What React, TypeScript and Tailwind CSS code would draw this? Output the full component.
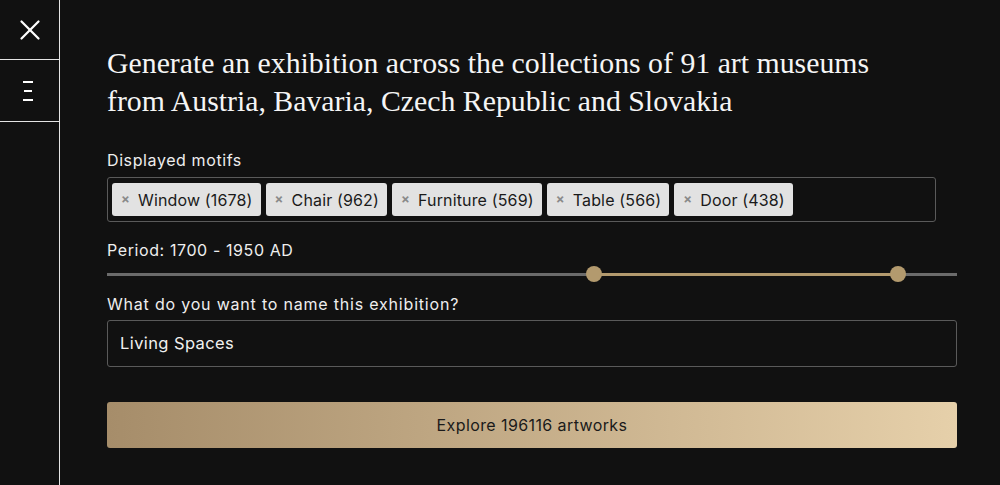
import { X } from "lucide-react";

const motifs = [
  "Window (1678)",
  "Chair (962)",
  "Furniture (569)",
  "Table (566)",
  "Door (438)",
];

const sans = { fontFamily: "Inter, 'Noto Sans', sans-serif" };

export default function App() {
  return (
    <div className="flex h-[485px] w-[1000px] overflow-hidden bg-[#111111] text-white" style={sans}>
      <aside className="flex w-[60px] shrink-0 flex-col border-r border-[#e5e5e5]">
        <div className="flex h-[60px] items-center justify-center border-b border-[#e5e5e5]">
          <X className="h-[34px] w-[34px] text-white" strokeWidth={1.6} />
        </div>
        <div className="flex h-[62px] flex-col items-center justify-center gap-[7px] border-b border-[#e5e5e5] pr-[3px]">
          <span className="h-[2px] w-[10px] bg-white" />
          <span className="h-[2px] w-[8px] bg-white" />
          <span className="h-[2px] w-[10px] bg-white" />
        </div>
      </aside>

      <main className="flex-1 pl-[47px] pr-[43px] pt-[44px]">
        <h1
          className="whitespace-nowrap text-[29.8px] leading-[38px] text-[#f5f5f5]"
          style={{ fontFamily: "'Liberation Serif', serif" }}
        >
          Generate an exhibition across the collections of 91 art museums
          <br />
          from Austria, Bavaria, Czech Republic and Slovakia
        </h1>

        <label className="mt-[30px] block text-[16px] leading-[20px] tracking-[0.6px] text-[#eeeeee]">
          Displayed motifs
        </label>
        <div className="mt-[7px] flex h-[45px] w-[829px] items-center gap-[5px] rounded-[3px] border border-[#5a5a5a] px-[4px]">
          {motifs.map((m) => (
            <span
              key={m}
              className="flex h-[33px] items-center gap-[8px] rounded-[3px] bg-[#e2e2e2] pl-[9px] pr-[8px] text-[16px] tracking-[0.15px] text-[#1a1a1a]"
            >
              <span className="text-[13px] font-bold text-[#8a8a8a]">×</span>
              {m}
            </span>
          ))}
        </div>

        <p className="mt-[18px] text-[16px] leading-[20px] tracking-[0.6px] text-[#eeeeee]">
          Period: 1700 - 1950 AD
        </p>
        <div className="relative mt-[6px] h-[16px]">
          <div className="absolute left-0 right-0 top-[7px] h-[3px] bg-[#6b6b6b]" />
          <div className="absolute left-[487px] right-[59px] top-[7px] h-[3px] bg-[#b39a6e]" />
          <div className="absolute left-[479px] top-0 h-[16px] w-[16px] rounded-full bg-[#b39a6e]" />
          <div className="absolute left-[783px] top-0 h-[16px] w-[16px] rounded-full bg-[#b39a6e]" />
        </div>

        <label className="mt-[12px] block text-[16px] leading-[20px] tracking-[0.8px] text-[#eeeeee]">
          What do you want to name this exhibition?
        </label>
        <div className="mt-[6px] flex h-[47px] items-center rounded-[3px] border border-[#5a5a5a] px-[12px] text-[16.5px] tracking-[0.4px] text-[#f0f0f0]">
          Living Spaces
        </div>

        <button className="mt-[35px] flex h-[46px] w-full items-center justify-center rounded-[3px] bg-gradient-to-r from-[#a68d6a] to-[#e6d0aa] text-[16px] tracking-[0.4px] text-[#1a1a1a]">
          Explore 196116 artworks
        </button>
      </main>
    </div>
  );
}
